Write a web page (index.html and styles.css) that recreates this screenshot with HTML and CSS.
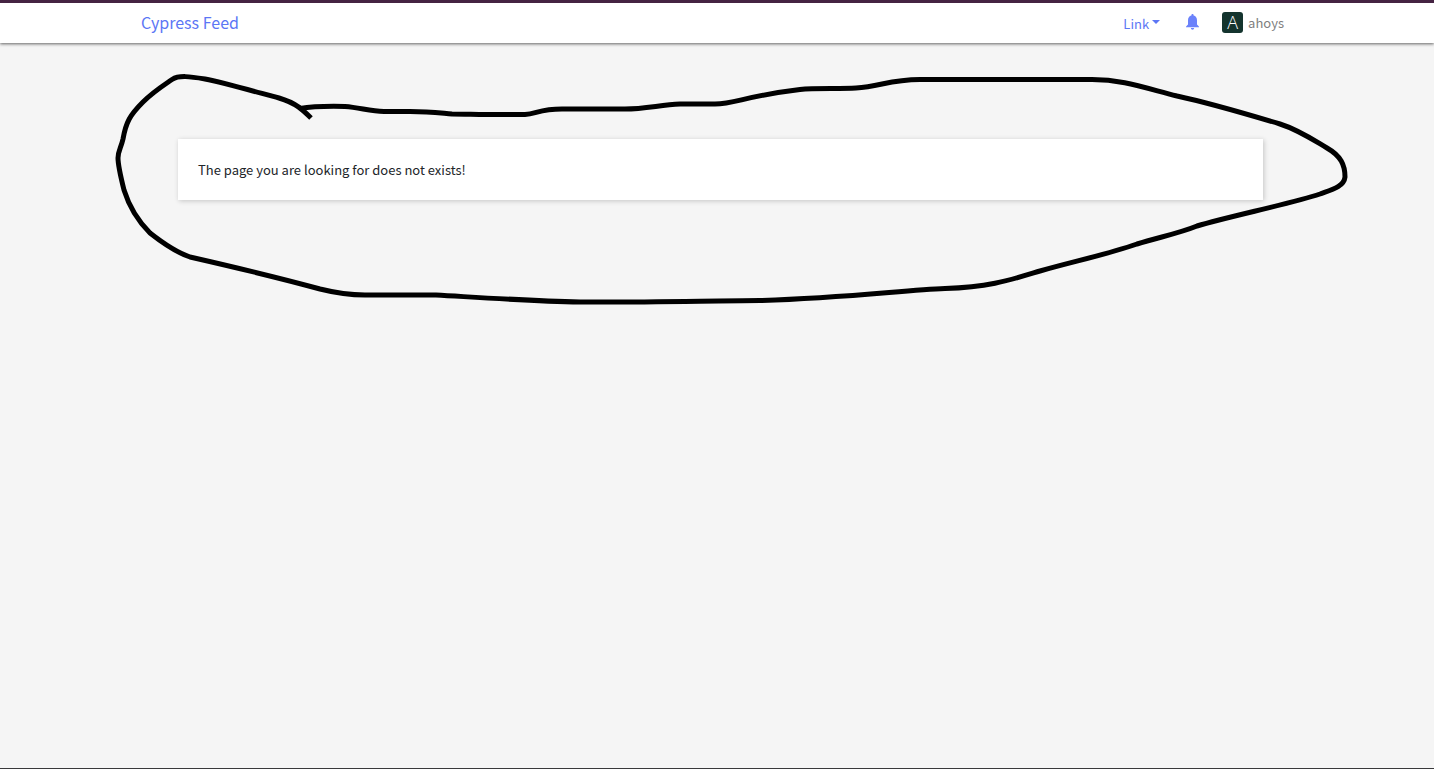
FILE: index.html
```html
<!DOCTYPE html>
<html lang="en">
<head>
    <meta charset="utf-8">
    <title>Cypress Feed</title>
    <link rel="stylesheet" href="styles.css">
</head>
<body>
    <header class="header">
        <nav class="navbar">
            <a href="#" class="brand">Cypress Feed</a>
            <div class="nav-right">
                <button type="button" class="dropdown-toggle">Link</button>
                <a href="#" class="notifications" aria-label="Notifications">
                    <svg width="13" height="16" viewBox="0 0 13 16">
                        <path fill="currentColor" d="M6.500 0C5.900 0 5.400.500 5.400 1.100V1.600C3.200 2.100 2 4 2 6.300V10.500L.3 12.200Q0 12.500 0 13.200H13Q13 12.500 12.700 12.200L11 10.500V6.300C11 4 9.800 2.100 7.600 1.600V1.100C7.600.500 7.100 0 6.500 0ZM4.800 14.100Q5 15.800 6.500 15.800T8.200 14.100Z"/>
                    </svg>
                </a>
                <a href="#" class="user">
                    <span class="avatar">A</span>
                    <span>ahoys</span>
                </a>
            </div>
        </nav>
    </header>
    <main class="content">
        <div class="card">
            <p>The page you are looking for does not exists!</p>
        </div>
        <!-- Hand drawn circle around the message -->
        <svg class="marker" viewBox="0 43 1434 277" aria-hidden="true">
            <path d="M300 108.500C312 106.500 324 106 345 106.500C360 107.500 370 111.500 384 111.500H410C430 111.500 440 113 452 114C465 114 475 114.500 485 114.500H525C536 114 540 109 562 109H625C645 109 660 105 680 104H715C735 104 745 96 800 89.500C815 88 840 89 856 88C880 87 890 79 922 79.500H1092C1122 79.500 1142 87 1177 96C1205 102 1240 112 1280 124C1299 130 1315 141 1327 148C1341 156 1345 165 1345 177C1344 187 1331 190 1320 194C1290 204 1230 216 1197 226C1180 233 1160 237 1137 244C1105 255 1075 261 1040 271C1010 280 990 287 945 288.500C905 290 845 298 760 300.500C700 301 640 302.500 580 302C530 301 480 297.500 436 295H365C345 295 332 292 320 289C280 278 225 265 190 257C178 253 164 244 150 233C137 220 129 206 124 190C120 174 118 165 118 158C118 151 121 148 123 139C126 122 130 115 143 102C153 92 161 87 172 79.500C179 75 190 76.500 205 79C225 83 260 93 279 98C296 103 303 110 311 118"/>
        </svg>
    </main>
</body>
</html>
```

FILE: styles.css
```css
* {
    box-sizing: border-box;
}
body {
    display: flex;
    flex-direction: column;
    min-height: 100vh;
    margin: 0;
    background-color: #f5f5f5;
    border-bottom: 1px solid #39393b;
    font-family: "Noto Sans CJK SC", sans-serif;
    font-size: 13px;
    line-height: 21px;
    color: #212529;
}
a {
    color: #5c76f5;
    text-decoration: none;
}
.header {
    height: 43px;
    background-color: #ffffff;
    border-top: 3px solid #452342;
    box-shadow: 0 1px 3px rgba(0, 0, 0, 0.6);
}
.navbar {
    display: flex;
    align-items: center;
    justify-content: space-between;
    max-width: 1152px;
    height: 40px;
    margin: 0 auto;
    padding: 0 9px 2px 0;
}
.brand {
    font-size: 16px;
}
.nav-right {
    display: flex;
    align-items: center;
}
.dropdown-toggle {
    display: flex;
    align-items: center;
    gap: 3px;
    padding: 2px 0 0;
    border: 0;
    background: none;
    font: inherit;
    color: #5c76f5;
}
.dropdown-toggle::after {
    content: "";
    margin-bottom: 2px;
    border-top: 4px solid;
    border-left: 4px solid transparent;
    border-right: 4px solid transparent;
}
.notifications {
    display: flex;
    margin: 0 23px 0 26px;
    color: #6b82fb;
}
.user {
    display: flex;
    align-items: center;
    gap: 5px;
    color: #808080;
}
.avatar {
    width: 21px;
    height: 21px;
    border-radius: 3px;
    background-color: #14342e;
    font-family: "Open Sans", sans-serif;
    font-size: 18px;
    font-weight: 300;
    line-height: 21px;
    text-align: center;
    color: #ffffff;
}
.content {
    position: relative;
    flex: 1;
    padding: 96px 171px 0 178px;
}
.card {
    padding: 20px;
    background-color: #ffffff;
    box-shadow: 1px 1px 5px rgba(0, 0, 0, 0.2);
}
.card p {
    margin: 0;
}
.marker {
    position: absolute;
    top: 0;
    left: 0;
    width: 100%;
    fill: none;
    stroke: #000000;
    stroke-width: 5;
    stroke-linejoin: round;
    pointer-events: none;
}
```
